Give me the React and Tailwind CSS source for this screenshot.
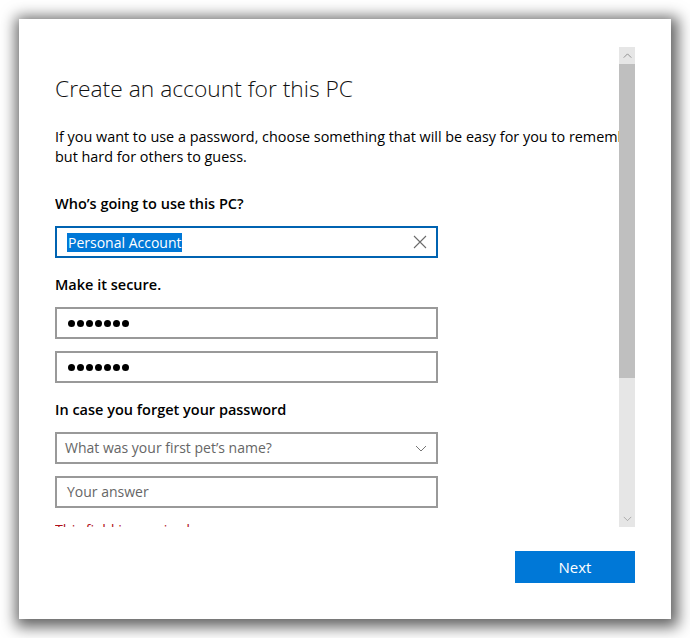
import React from "react";

const font = { fontFamily: '"Segoe UI", "Open Sans", "Noto Sans", sans-serif' };

// --- Small drawings ---
const ClearIcon = () => (
  <svg width="14" height="14" viewBox="0 0 14 14" className="shrink-0">
    <path d="M1 1 L13 13 M13 1 L1 13" stroke="#6b6b6b" strokeWidth="1.1" fill="none" />
  </svg>
);

const Chevron = ({ up = false, size = 12, color = "#6b6b6b" }) => (
  <svg width={size} height={size / 2 + 1} viewBox="0 0 12 7" className="shrink-0">
    <path
      d={up ? "M1 6 L6 1 L11 6" : "M1 1 L6 6 L11 1"}
      stroke={color}
      strokeWidth="1"
      fill="none"
    />
  </svg>
);

const Dots = () => (
  <div className="flex items-center gap-[2px]">
    {[0, 1, 2, 3, 4, 5, 6].map((i) => (
      <span key={i} className="w-[7px] h-[7px] rounded-full bg-black" />
    ))}
  </div>
);

// --- Form pieces ---
const Label = ({ children, className = "" }) => (
  <div className={`h-[20px] leading-[20px] text-[14.5px] font-semibold text-black ${className}`}>
    {children}
  </div>
);

const Field = ({ children, className = "", focused = false }) => (
  <div
    className={`w-[383px] h-[32px] border-2 flex items-center pr-[8px] ${
      focused ? "border-[#0063b1]" : "border-[#999999]"
    } ${className}`}
  >
    {children}
  </div>
);

const Scrollbar = () => (
  <div className="w-[16px] h-[480px] bg-[#e6e6e6] flex flex-col">
    <div className="h-[17px] flex items-center justify-center">
      <Chevron up size={9} color="#777" />
    </div>
    <div className="h-[314px] bg-[#bfbfbf]" />
    <div className="flex-1" />
    <div className="h-[17px] flex items-center justify-center">
      <Chevron size={9} color="#999" />
    </div>
  </div>
);

export default function App() {
  return (
    <div className="w-[690px] h-[638px] bg-white pt-[19px] pl-[19px]" style={font}>
      <div className="w-[652px] h-[600px] bg-white shadow-[2px_3px_14px_5px_rgba(0,0,0,0.62)] px-[36px] pt-[28px]">
        {/* Scroll area */}
        <div className="flex">
          <div className="w-[564px] h-[480px] overflow-hidden">
            <div className="w-[620px]">
              <h1 className="mt-[26px] h-[32px] leading-[32px] text-[22.8px] font-light text-[#111]">
                Create an account for this PC
              </h1>
              <p className="mt-[22px] text-[14.4px] leading-[20px] text-black">
                If you want to use a password, choose something that will be easy for you to remember
                <br />
                but hard for others to guess.
              </p>

              <Label className="mt-[27px]">Who’s going to use this PC?</Label>
              <Field focused className="mt-[12px] pl-[10px] justify-between">
                <span className="bg-[#0078d7] text-white text-[14px] leading-[19px] px-[1px]">
                  Personal Account
                </span>
                <span className="pr-[1px]">
                  <ClearIcon />
                </span>
              </Field>

              <Label className="mt-[17px]">Make it secure.</Label>
              <Field className="mt-[12px] pl-[11px]">
                <Dots />
              </Field>
              <Field className="mt-[12px] pl-[11px]">
                <Dots />
              </Field>

              <Label className="mt-[17px]">In case you forget your password</Label>
              <Field className="mt-[12px] pl-[8px] justify-between">
                <span className="text-[14px] leading-[18px] text-[#666666] -mt-[1px]">
                  What was your first pet’s name?
                </span>
                <span className="pr-[1px]">
                  <Chevron size={12} color="#777" />
                </span>
              </Field>
              <Field className="mt-[12px] pl-[10px]">
                <span className="text-[14px] leading-[18px] text-[#666666] -mt-[1px]">Your answer</span>
              </Field>
              <div className="mt-[12px] text-[14.3px] leading-[20px] text-[#b0101a]">
                This field is required.
              </div>
            </div>
          </div>
          <Scrollbar />
        </div>

        {/* Footer */}
        <div className="mt-[24px] flex justify-end">
          <button className="w-[120px] h-[32px] bg-[#0078d7] text-white text-[15px]">
            Next
          </button>
        </div>
      </div>
    </div>
  );
}
